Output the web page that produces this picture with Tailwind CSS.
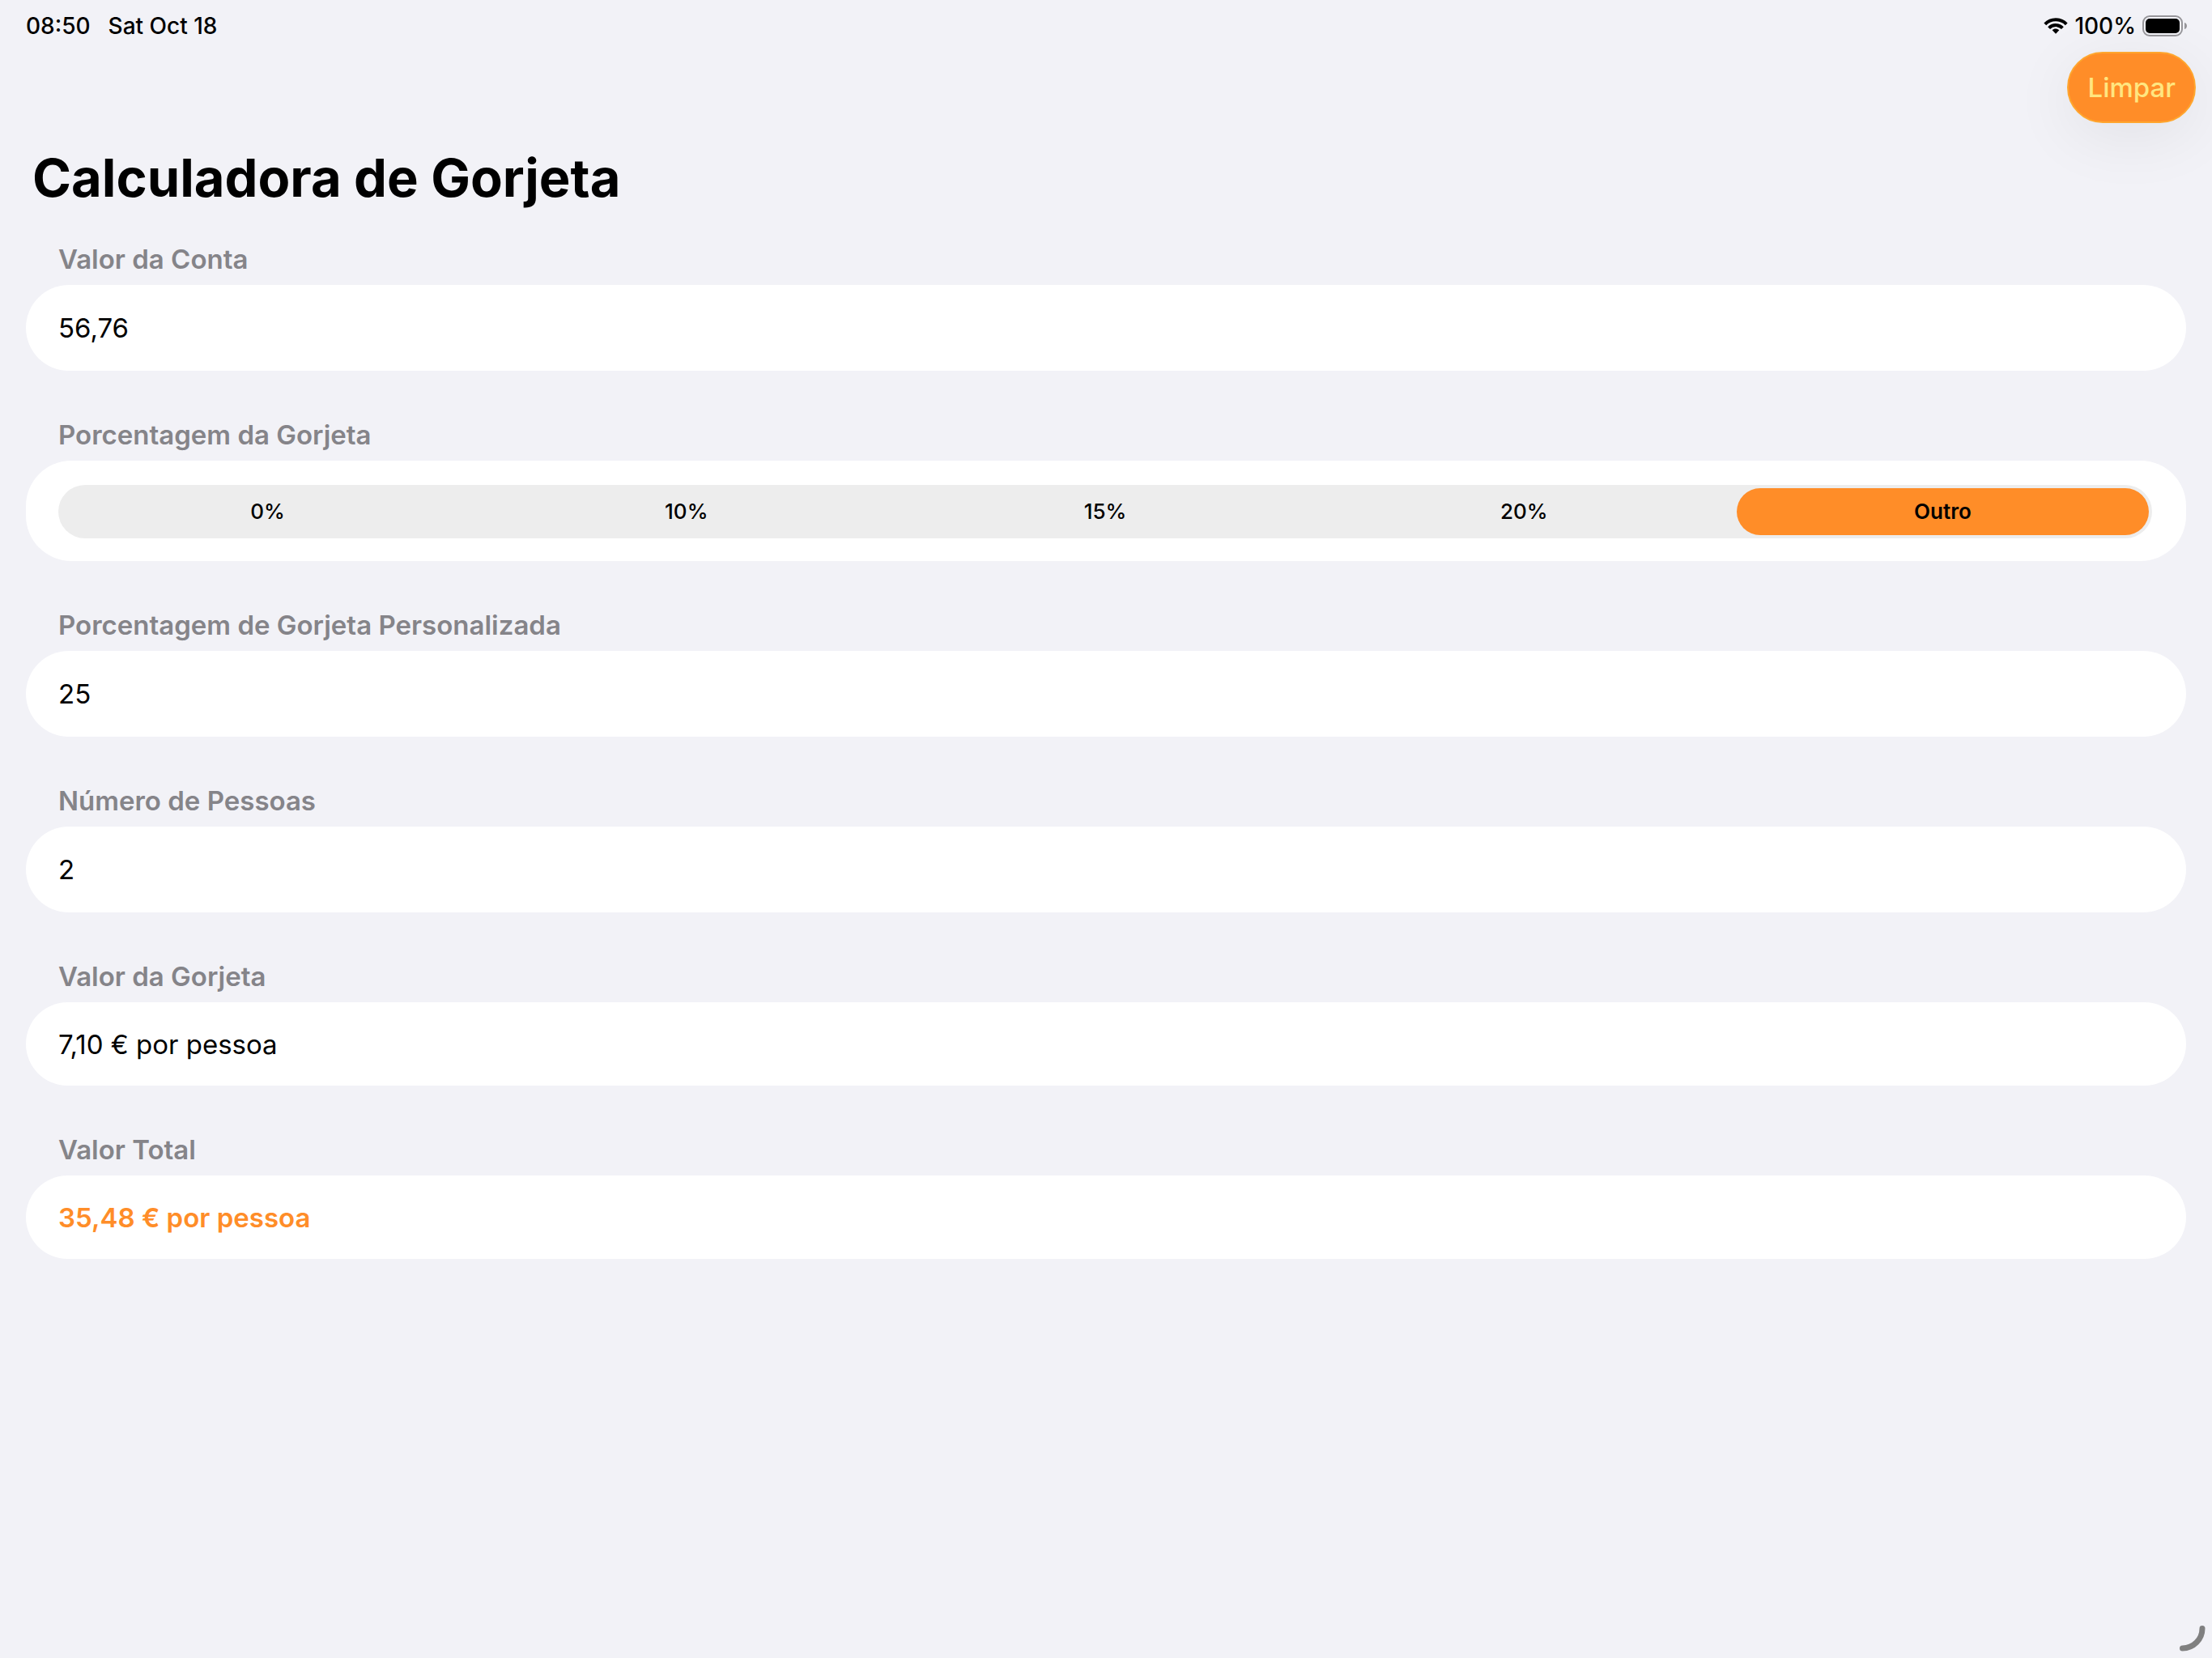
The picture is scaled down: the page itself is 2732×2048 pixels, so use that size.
<!DOCTYPE html>
<html lang="pt">
<head>
<meta charset="utf-8">
<meta name="viewport" content="width=device-width, initial-scale=1">
<title>Calculadora de Gorjeta</title>
<script src="https://cdn.jsdelivr.net/npm/@tailwindcss/browser@4"></script>
</head>
<body class="flex min-h-screen flex-col bg-[#f2f2f7] font-['Inter','Liberation_Sans',sans-serif] text-black">
  <header>
    <div class="flex h-16 items-center justify-between pr-[30px] pl-8 text-[28px] leading-8 font-medium">
      <div class="flex gap-[22px]">
        <time>08:50</time>
        <span>Sat Oct 18</span>
      </div>
      <div class="flex items-center gap-2">
        <svg class="h-5 w-[30px]" viewBox="0 0 30 20" fill="none" stroke="#000" stroke-width="4" aria-label="Wi-Fi">
          <path d="M1.8 7.8a18.6 18.6 0 0 1 26.4 0"/>
          <path d="M6.6 12.6a11.8 11.8 0 0 1 16.8 0"/>
          <path d="M15 13.6c-1.700 0-3.200.7-4.300 1.700L15 19.800l4.300-4.500A6.200 6.200 0 0 0 15 13.600z" fill="#000" stroke="none"/>
        </svg>
        <span>100%</span>
        <svg class="h-[26px] w-[56px]" viewBox="0 0 56 26" aria-label="Bateria">
          <rect x="1" y="1" width="48" height="24" rx="8" fill="none" stroke="#97969a" stroke-width="2"/>
          <rect x="4" y="4" width="42" height="18" rx="5" fill="#000"/>
          <path d="M52 9c4 1 4 7 0 8z" fill="#97969a"/>
        </svg>
      </div>
    </div>
    <div class="flex justify-end px-5">
      <button type="reset" form="tip" class="h-[88px] rounded-full border-2 border-[#ffa62e] bg-[#ff8d28] px-[23px] text-[33px] leading-10 font-medium text-[#ffe680] shadow-[0_16px_80px_rgba(0,0,0,0.07)]">Limpar</button>
    </div>
    <h1 class="mt-7 px-10 text-[65px] leading-[80px] font-bold">Calculadora de Gorjeta</h1>
  </header>

  <form id="tip" class="mt-10 flex flex-col gap-[59px] px-8 text-[33px] leading-10">
    <div class="flex flex-col gap-3">
      <label for="bill" class="px-10 font-semibold text-[#858489]">Valor da Conta</label>
      <input id="bill" type="text" inputmode="decimal" value="56,76" class="h-[106px] w-full rounded-[53px] bg-white px-10 outline-none">
    </div>

    <fieldset>
      <legend class="mb-3 px-10 font-semibold text-[#858489]">Porcentagem da Gorjeta</legend>
      <div class="rounded-[56px] bg-white pt-[30px] pr-[42px] pb-7 pl-10">
        <div class="grid h-[66px] grid-cols-5 rounded-full bg-[#ededed] py-1 text-center text-[26px] leading-[58px] font-medium">
          <label class="mx-1 rounded-full has-checked:bg-[#ff8d28] has-checked:font-semibold"><input type="radio" name="pct" value="0" class="sr-only">0%</label>
          <label class="mx-1 rounded-full has-checked:bg-[#ff8d28] has-checked:font-semibold"><input type="radio" name="pct" value="10" class="sr-only">10%</label>
          <label class="mx-1 rounded-full has-checked:bg-[#ff8d28] has-checked:font-semibold"><input type="radio" name="pct" value="15" class="sr-only">15%</label>
          <label class="mx-1 rounded-full has-checked:bg-[#ff8d28] has-checked:font-semibold"><input type="radio" name="pct" value="20" class="sr-only">20%</label>
          <label class="mx-1 rounded-full has-checked:bg-[#ff8d28] has-checked:font-semibold"><input type="radio" name="pct" value="other" class="sr-only" checked>Outro</label>
        </div>
      </div>
    </fieldset>

    <div class="flex flex-col gap-3">
      <label for="custom" class="px-10 font-semibold text-[#858489]">Porcentagem de Gorjeta Personalizada</label>
      <input id="custom" type="text" inputmode="decimal" value="25" class="h-[106px] w-full rounded-[53px] bg-white px-10 outline-none">
    </div>

    <div class="flex flex-col gap-3">
      <label for="people" class="px-10 font-semibold text-[#858489]">Número de Pessoas</label>
      <input id="people" type="text" inputmode="numeric" value="2" class="h-[106px] w-full rounded-[53px] bg-white px-10 outline-none">
    </div>

    <div class="flex flex-col gap-3">
      <label for="tip-value" class="px-10 font-semibold text-[#858489]">Valor da Gorjeta</label>
      <output id="tip-value" class="flex h-[103px] items-center rounded-[53px] bg-white px-10">7,10 € por pessoa</output>
    </div>

    <div class="flex flex-col gap-3">
      <label for="total" class="px-10 font-semibold text-[#858489]">Valor Total</label>
      <output id="total" class="flex h-[103px] items-center rounded-[53px] bg-white px-10 font-semibold text-[#ff8d28]">35,48 € por pessoa</output>
    </div>
  </form>

  <svg class="fixed right-2 bottom-2 size-8" viewBox="0 0 32 32" fill="none" stroke="#808080" stroke-width="7" stroke-linecap="round" aria-hidden="true">
    <path d="M28 3.500A24.500 24.500 0 0 1 3.500 28"/>
  </svg>
</body>
</html>
